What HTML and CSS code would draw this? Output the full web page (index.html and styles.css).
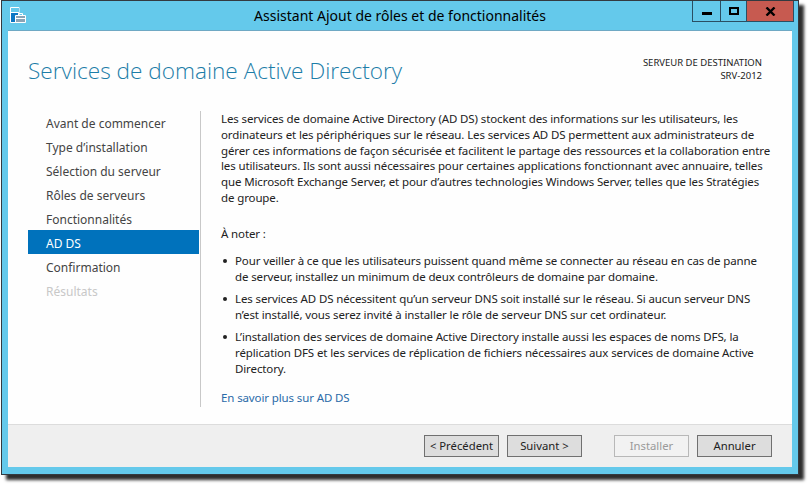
FILE: index.html
```html
<!DOCTYPE html>
<html lang="fr">
<head>
<meta charset="utf-8">
<title>Assistant Ajout de rôles et de fonctionnalités</title>
<link rel="stylesheet" href="styles.css">
</head>
<body>
<div class="window">
  <header class="titlebar">
    <svg class="appicon" width="16" height="16" viewBox="0 0 16 16">
      <path d="M.5 .5h8.500v15h-8.500z" fill="#0a76c4" stroke="#fff"/>
      <path d="M1 5.500h8" stroke="#fff" fill="none"/>
      <path d="M1 1h7.500v4h-7.500z" fill="#64c9eb"/>
      <path d="M5.500 8.500h10v7h-10z" fill="#8ba4b6" stroke="#fff"/>
      <path d="M8.500 8.500v-2h4v2M5.500 11.500h10" fill="none" stroke="#fff"/>
    </svg>
    <div class="title">Assistant Ajout de rôles et de fonctionnalités</div>
    <div class="controls">
      <div class="ctl ctl-min"><span class="min-glyph"></span></div>
      <div class="ctl ctl-max"><span class="max-glyph"></span></div>
      <div class="ctl ctl-close"><svg width="11" height="9" viewBox="0 0 11 9"><path d="M1.500 .5l8 8M9.500 .5l-8 8" stroke="#000" stroke-width="2.400" fill="none"/></svg></div>
    </div>
  </header>
  <div class="client">
    <div class="head">
      <h1 class="heading">Services de domaine Active Directory</h1>
      <div class="dest"><div>SERVEUR DE DESTINATION</div><div>SRV-2012</div></div>
    </div>
    <div class="main">
      <nav class="steps">
        <div class="step">Avant de commencer</div>
        <div class="step">Type d’installation</div>
        <div class="step">Sélection du serveur</div>
        <div class="step">Rôles de serveurs</div>
        <div class="step">Fonctionnalités</div>
        <div class="step active">AD DS</div>
        <div class="step">Confirmation</div>
        <div class="step disabled">Résultats</div>
      </nav>
      <div class="content">
        <p class="intro">Les services de domaine Active Directory (AD DS) stockent des informations sur les utilisateurs, les<br>ordinateurs et les périphériques sur le réseau. Les services AD DS permettent aux administrateurs de<br>gérer ces informations de façon sécurisée et facilitent le partage des ressources et la collaboration entre<br>les utilisateurs. Ils sont aussi nécessaires pour certaines applications fonctionnant avec annuaire, telles<br>que Microsoft Exchange Server, et pour d’autres technologies Windows Server, telles que les Stratégies<br>de groupe.</p>
        <p class="note">À noter :</p>
        <ul class="bullets">
          <li>Pour veiller à ce que les utilisateurs puissent quand même se connecter au réseau en cas de panne<br>de serveur, installez un minimum de deux contrôleurs de domaine par domaine.</li>
          <li>Les services AD DS nécessitent qu’un serveur DNS soit installé sur le réseau. Si aucun serveur DNS<br>n’est installé, vous serez invité à installer le rôle de serveur DNS sur cet ordinateur.</li>
          <li>L’installation des services de domaine Active Directory installe aussi les espaces de noms DFS, la<br>réplication DFS et les services de réplication de fichiers nécessaires aux services de domaine Active<br>Directory.</li>
        </ul>
        <a class="more" href="#">En savoir plus sur AD DS</a>
      </div>
    </div>
    <footer class="footer">
      <button class="btn">&lt; Précédent</button>
      <button class="btn">Suivant &gt;</button>
      <button class="btn off">Installer</button>
      <button class="btn">Annuler</button>
    </footer>
  </div>
</div>
</body>
</html>
```
FILE: styles.css
```css
html, body { margin: 0; padding: 0; background: #fff; }
body { width: 810px; height: 485px; overflow: hidden; padding-left: 1px; box-sizing: border-box; font-family: "Noto Sans", sans-serif; font-size: 11.5px; color: #222; }
.window { width: 798px; height: 475px; box-sizing: border-box; border: 1px solid #333a40; background: #64c9eb; padding: 0 6px 7px; display: flex; flex-direction: column; box-shadow: 5px 5px 3px #2e2e2e; }
.titlebar { height: 29px; flex: none; display: flex; align-items: flex-start; position: relative; }
.appicon { margin: 6px 0 0 2px; }
.title { position: absolute; left: 0; right: 0; top: 5px; text-align: center; font-size: 14px; line-height: 20px; color: #000; }
.controls { margin-left: auto; display: flex; position: relative; margin-right: -2px; }
.ctl { height: 21px; box-sizing: border-box; border: 1px solid #2a4f63; border-top: 0; display: flex; align-items: center; justify-content: center; margin-left: -1px; }
.ctl-min { width: 29px; }
.ctl-max { width: 27px; }
.ctl-close { width: 48px; background: #c75a50; }
.min-glyph { width: 10px; height: 3px; background: #000; margin-top: 5px; }
.max-glyph { box-sizing: content-box; width: 6px; height: 4px; border: 2px solid #000; }
.client { flex: 1; background: #fefefe; display: flex; flex-direction: column; border-top: 1px solid #6fa9c4; }
.head { height: 80px; flex: none; display: flex; justify-content: space-between; padding: 0 30px 0 20px; box-sizing: border-box; }
.heading { margin: 24px 0 0; font-family: "Open Sans", sans-serif; font-weight: 300; font-size: 22.600px; line-height: 32px; color: #1c7da8; }
.dest { margin-top: 25px; text-align: right; font-size: 9.500px; line-height: 13px; color: #222; }
.main { flex: 1; display: flex; min-height: 0; }
.steps { width: 171px; margin: -1px 0 0 20px; flex: none; font-size: 12px; }
.step { height: 24px; line-height: 28px; padding-left: 18px; color: #444; }
.step.active { background: #0072bc; color: #fff; }
.step.disabled { color: #c8c8c8; }
.content { margin-left: 1px; border-left: 1px solid #c8c8c8; padding-left: 20px; flex: 1; line-height: 15.800px; height: 296px; letter-spacing: -.12px; }
.intro { margin: 0; }
.note { margin: 20px 0 0; }
.bullets { margin: 11px 0 0; padding: 0; list-style: none; line-height: 16px; }
.bullets li { position: relative; padding-left: 14px; margin-bottom: 6px; }
.bullets li::before { content: ""; position: absolute; left: 2px; top: 6px; width: 4px; height: 4px; border-radius: 50%; background: #222; }
.more { display: block; margin-top: 13px; color: #2a6aa8; text-decoration: none; }
.footer { height: 43px; flex: none; box-sizing: border-box; border-top: 1px solid #dcdcdc; background: #efefef; display: flex; justify-content: flex-end; align-items: flex-start; padding: 10px 20px 0 0; }
.btn { width: 75px; height: 22px; padding: 0; margin-left: 8px; border: 1px solid #707070; background: #dddddd; font: inherit; font-size: 11.300px; color: #222; line-height: 18px; }
.btn.off { margin-left: 32px; border-color: #b8b8b8; background: #f2f2f2; color: #9a9a9a; }
```
